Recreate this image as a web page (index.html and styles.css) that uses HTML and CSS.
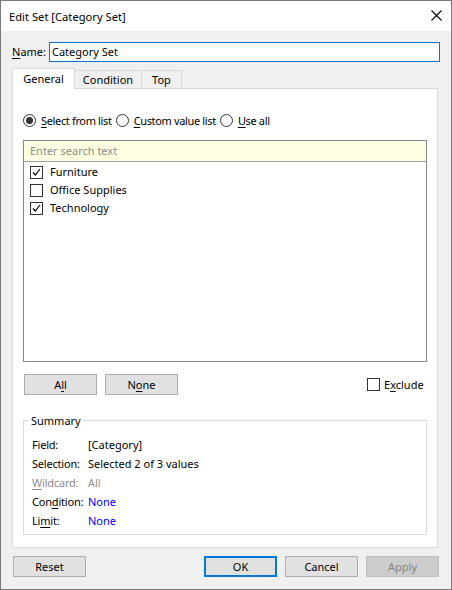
FILE: index.html
```html
<!DOCTYPE html>
<html>
<head>
<meta charset="utf-8">
<link rel="stylesheet" href="styles.css">
</head>
<body>
<div class="window">
  <div class="titlebar">
    <span class="title">Edit Set [Category Set]</span>
    <svg class="close" width="11" height="11" viewBox="0 0 11 11"><path d="M0.5 0.5L10.5 10.5M10.5 0.5L0.5 10.5" stroke="#000" stroke-width="1.1" fill="none"/></svg>
  </div>
  <div class="body">
    <div class="name-row">
      <span class="name-label"><u>N</u>ame:</span>
      <div class="input">Category Set</div>
    </div>
    <div class="tabs">
      <div class="tab active">General</div>
      <div class="tab">Condition</div>
      <div class="tab">Top</div>
      <div class="tab-fill"></div>
    </div>
    <div class="panel">
      <div class="radio-row">
        <span class="radio on"></span><span class="rlabel"><u>S</u>elect from list</span>
        <span class="radio"></span><span class="rlabel"><u>C</u>ustom value list</span>
        <span class="radio"></span><span class="rlabel"><u>U</u>se all</span>
      </div>
      <div class="list">
        <div class="search">Enter search text</div>
        <div class="items">
          <div class="item"><span class="check on"><svg width="11" height="11" viewBox="0 0 11 11"><path d="M2 5.5L4.3 8L9 2" stroke="#000" stroke-width="1.2" fill="none"/></svg></span><span>Furniture</span></div>
          <div class="item"><span class="check"></span><span>Office Supplies</span></div>
          <div class="item"><span class="check on"><svg width="11" height="11" viewBox="0 0 11 11"><path d="M2 5.5L4.3 8L9 2" stroke="#000" stroke-width="1.2" fill="none"/></svg></span><span>Technology</span></div>
        </div>
      </div>
      <div class="btn-row">
        <div class="btn">A<u>l</u>l</div>
        <div class="btn">N<u>o</u>ne</div>
        <div class="exclude"><span class="check"></span><span>E<u>x</u>clude</span></div>
      </div>
      <div class="group">
        <div class="legend">Summary</div>
        <div class="srow"><span class="sl">Field:</span><span>[Category]</span></div>
        <div class="srow"><span class="sl">Selection:</span><span>Selected 2 of 3 values</span></div>
        <div class="srow dim"><span class="sl"><u>W</u>ildcard:</span><span>All</span></div>
        <div class="srow"><span class="sl">Con<u>d</u>ition:</span><span class="blue">None</span></div>
        <div class="srow"><span class="sl">Li<u>m</u>it:</span><span class="blue">None</span></div>
      </div>
    </div>
    <div class="footer">
      <div class="btn">Reset</div>
      <div class="spacer"></div>
      <div class="btn default">OK</div>
      <div class="btn">Cancel</div>
      <div class="btn disabled">Apply</div>
    </div>
  </div>
</div>
</body>
</html>
```

FILE: styles.css
```css
html, body {
  margin: 0;
  padding: 0;
}
body {
  font-family: "Noto Sans", "Open Sans", sans-serif;
  font-size: 11px;
  color: #000;
  background: #fff;
}
u {
  text-decoration: underline;
  text-underline-offset: 2px;
  text-decoration-thickness: 1px;
}
.window {
  width: 452px;
  height: 590px;
  box-sizing: border-box;
  border: 1px solid #7a7a7a;
  display: flex;
  flex-direction: column;
  background: #f0f0f0;
}
.titlebar {
  height: 30px;
  background: #fff;
  display: flex;
  align-items: center;
  padding-left: 8px;
  padding-right: 9px;
  flex-shrink: 0;
}
.title {
  flex: 1;
  font-size: 11.2px;
  line-height: 16px;
  margin-top: 1px;
}
.close {
  display: block;
  margin-top: -1px;
}
.body {
  flex: 1;
  padding: 0 11px;
  display: flex;
  flex-direction: column;
}
.name-row {
  margin-top: 11px;
  height: 20px;
  display: flex;
  align-items: center;
}
.name-label {
  width: 37px;
  line-height: 16px;
}
.input {
  width: 391px;
  height: 20px;
  box-sizing: border-box;
  border: 1px solid #0078d7;
  background: #fff;
  padding-left: 2px;
  line-height: 18px;
}
.tabs {
  margin-top: 6px;
  height: 21px;
  width: 426px;
  display: flex;
  align-items: flex-end;
}
.tab {
  box-sizing: border-box;
  height: 19px;
  border-top: 1px solid #d9d9d9;
  border-right: 1px solid #d9d9d9;
  border-bottom: 1px solid #d9d9d9;
  background: #f0f0f0;
  display: flex;
  align-items: center;
  justify-content: center;
  line-height: 16px;
  width: 67px;
}
.tab.active {
  height: 21px;
  width: 63px;
  border-left: 1px solid #d9d9d9;
  border-bottom: none;
  background: #fff;
  padding-bottom: 1px;
}
.tab:nth-child(3) {
  width: 40px;
}
.tab-fill {
  flex: 1;
  height: 1px;
  border-bottom: 1px solid #d9d9d9;
}
.panel {
  width: 426px;
  box-sizing: border-box;
  background: #fff;
  border-left: 1px solid #d9d9d9;
  border-right: 1px solid #d9d9d9;
  border-bottom: 1px solid #d9d9d9;
  padding: 0 10px 12px 10px;
  display: flex;
  flex-direction: column;
}
.radio-row {
  margin-top: 25px;
  height: 13px;
  display: flex;
  align-items: center;
}
.radio {
  width: 13px;
  height: 13px;
  box-sizing: border-box;
  border: 1px solid #333;
  border-radius: 50%;
  display: flex;
  align-items: center;
  justify-content: center;
  flex-shrink: 0;
}
.radio.on::after {
  content: "";
  width: 7px;
  height: 7px;
  border-radius: 50%;
  background: #333;
}
.rlabel {
  margin-left: 5px;
  margin-right: 4px;
  line-height: 16px;
  letter-spacing: -0.35px;
}
.list {
  margin-top: 13px;
  height: 222px;
  box-sizing: border-box;
  border: 1px solid #828790;
  display: flex;
  flex-direction: column;
}
.search {
  height: 21px;
  box-sizing: border-box;
  background: #ffffe1;
  border-bottom: 1px solid #a0a0a0;
  color: #8c8c8c;
  padding-left: 6px;
  line-height: 20px;
}
.items {
  padding-top: 1px;
}
.item {
  height: 18px;
  display: flex;
  align-items: center;
  padding-left: 6px;
  line-height: 16px;
}
.check {
  width: 13px;
  height: 13px;
  box-sizing: border-box;
  border: 1px solid #333;
  background: #fff;
  margin-right: 7px;
  display: flex;
  align-items: center;
  justify-content: center;
  flex-shrink: 0;
}
.check svg {
  display: block;
}
.btn-row {
  margin-top: 12px;
  height: 21px;
  display: flex;
  align-items: center;
}
.btn {
  width: 73px;
  height: 21px;
  box-sizing: border-box;
  border: 1px solid #adadad;
  background: #e1e1e1;
  text-align: center;
  line-height: 19px;
  flex-shrink: 0;
}
.btn-row .btn:first-child {
  margin-left: 1px;
  margin-right: 8px;
}
.exclude {
  margin-left: auto;
  width: 60px;
  display: flex;
  align-items: center;
  line-height: 16px;
}
.exclude .check {
  margin-right: 4px;
}
.group {
  margin-top: 25px;
  height: 115px;
  box-sizing: border-box;
  border: 1px solid #dcdcdc;
  display: flex;
  flex-direction: column;
}
.legend {
  margin-top: -7px;
  margin-left: 5px;
  height: 14px;
  line-height: 14px;
  padding: 0 2px;
  background: #fff;
  align-self: flex-start;
  margin-bottom: 7px;
}
.srow {
  height: 19px;
  display: flex;
  align-items: center;
  padding-left: 8px;
  line-height: 16px;
}
.sl {
  width: 56px;
  letter-spacing: -0.2px;
}
.dim {
  color: #8d8d8d;
}
.blue {
  color: #0000ff;
}
.footer {
  margin-top: 8px;
  display: flex;
  gap: 8px;
  padding: 0 1px;
}
.spacer {
  flex: 1;
}
.btn.default {
  border: 2px solid #0078d7;
  line-height: 17px;
}
.btn.disabled {
  background: #cccccc;
  border-color: #bfbfbf;
  color: #838383;
}
```
